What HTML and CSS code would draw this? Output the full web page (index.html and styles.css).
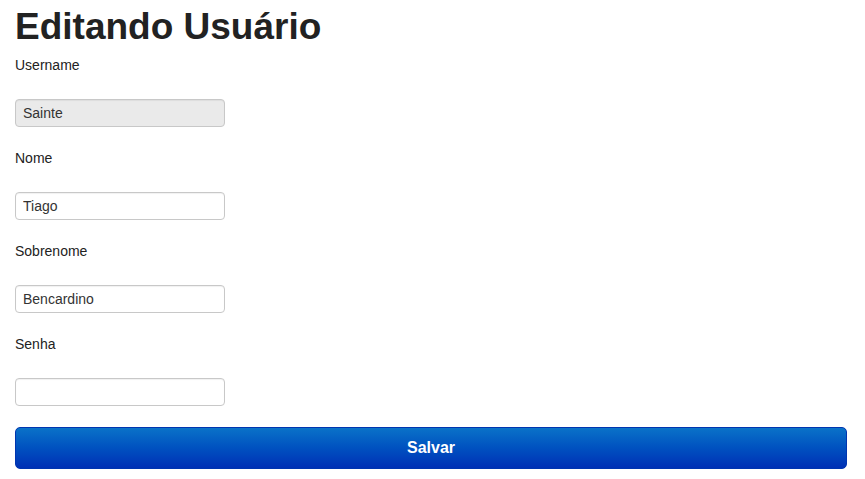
FILE: index.html
```html
<!DOCTYPE html>
<html lang="pt-BR">
<head>
<meta charset="utf-8">
<title>Editando Usuário</title>
<link rel="stylesheet" href="styles.css">
</head>
<body>
<main class="page">
  <h1 class="title">Editando Usuário</h1>
  <form class="form">
    <div class="field">
      <label class="label" for="username">Username</label>
      <input class="input input-readonly" id="username" type="text" value="Sainte" readonly>
    </div>
    <div class="field">
      <label class="label" for="nome">Nome</label>
      <input class="input" id="nome" type="text" value="Tiago">
    </div>
    <div class="field">
      <label class="label" for="sobrenome">Sobrenome</label>
      <input class="input" id="sobrenome" type="text" value="Bencardino">
    </div>
    <div class="field">
      <label class="label" for="senha">Senha</label>
      <input class="input" id="senha" type="password" value="">
    </div>
    <button class="button" type="submit">Salvar</button>
  </form>
</main>
</body>
</html>
```
FILE: styles.css
```css
html, body {
  margin: 0;
  padding: 0;
  background: #ffffff;
}

body {
  font-family: "Liberation Sans", Arial, Helvetica, sans-serif;
  color: #222222;
}

.page {
  padding: 7px 18px 0 15px;
}

.title {
  margin: 0;
  font-size: 37px;
  line-height: 40px;
  font-weight: bold;
  color: #222222;
}

.form {
  display: flex;
  flex-direction: column;
  margin-top: 8px;
}

.field {
  display: flex;
  flex-direction: column;
  align-items: flex-start;
  margin-bottom: 21px;
}

.field:last-of-type {
  margin-bottom: 21px;
}

.label {
  font-size: 14px;
  line-height: 20px;
  color: #222222;
  margin-bottom: 24px;
}

.input {
  box-sizing: border-box;
  width: 210px;
  height: 28px;
  margin: 0;
  padding: 0 7px;
  border: 1px solid #c8c8c8;
  border-radius: 4px;
  background: #ffffff;
  font-family: "Liberation Sans", Arial, Helvetica, sans-serif;
  font-size: 14px;
  color: #333333;
  box-shadow: inset 0 1px 1px rgba(0, 0, 0, 0.06);
  outline: none;
}

.input-readonly {
  background: #eaeaea;
}

.button {
  box-sizing: border-box;
  width: 832px;
  height: 42px;
  margin: 0;
  border: 1px solid #0035b0;
  border-radius: 5px;
  background: linear-gradient(to bottom, #0a72c8 0%, #0051c0 50%, #0030b5 100%);
  color: #ffffff;
  font-family: "Liberation Sans", Arial, Helvetica, sans-serif;
  font-size: 16px;
  font-weight: bold;
  cursor: pointer;
}
```
